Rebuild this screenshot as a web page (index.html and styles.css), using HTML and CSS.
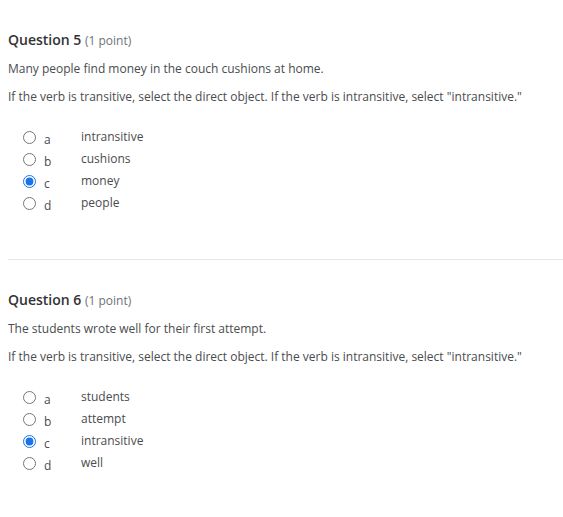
FILE: index.html
```html
<!DOCTYPE html>
<html>
<head>
<meta charset="utf-8">
<link rel="stylesheet" href="styles.css">
</head>
<body>
<div class="page">
  <section class="question">
    <h2 class="q-title">Question 5 <span class="pts">(1 point)</span></h2>
    <p class="q-text">Many people find money in the couch cushions at home.</p>
    <p class="q-text">If the verb is transitive, select the direct object. If the verb is intransitive, select "intransitive."</p>
    <ul class="options">
      <li class="opt"><input type="radio" name="q5"><span class="letter">a</span><span class="ans">intransitive</span></li>
      <li class="opt"><input type="radio" name="q5"><span class="letter">b</span><span class="ans">cushions</span></li>
      <li class="opt"><input type="radio" name="q5" checked><span class="letter">c</span><span class="ans">money</span></li>
      <li class="opt"><input type="radio" name="q5"><span class="letter">d</span><span class="ans">people</span></li>
    </ul>
  </section>
  <hr class="divider">
  <section class="question">
    <h2 class="q-title">Question 6 <span class="pts">(1 point)</span></h2>
    <p class="q-text">The students wrote well for their first attempt.</p>
    <p class="q-text">If the verb is transitive, select the direct object. If the verb is intransitive, select "intransitive."</p>
    <ul class="options">
      <li class="opt"><input type="radio" name="q6"><span class="letter">a</span><span class="ans">students</span></li>
      <li class="opt"><input type="radio" name="q6"><span class="letter">b</span><span class="ans">attempt</span></li>
      <li class="opt"><input type="radio" name="q6" checked><span class="letter">c</span><span class="ans">intransitive</span></li>
      <li class="opt"><input type="radio" name="q6"><span class="letter">d</span><span class="ans">well</span></li>
    </ul>
  </section>
</div>
</body>
</html>
```

FILE: styles.css
```css
html, body {
  margin: 0;
  padding: 0;
  background: #ffffff;
}
body {
  font-family: "Open Sans", "Liberation Sans", sans-serif;
  color: #494c4e;
}
.page {
  padding: 30px 0 0 8px;
}
.question {
  margin: 0;
}
.q-title {
  margin: 0;
  font-size: 14px;
  line-height: 20px;
  font-weight: 600;
  color: #333333;
}
.pts {
  font-size: 12px;
  font-weight: 400;
  color: #6e7376;
}
.q-text {
  margin: 9px 0 0 0;
  font-size: 12px;
  line-height: 18px;
  color: #494c4e;
}
.q-text + .q-text {
  margin-top: 10px;
}
.options {
  list-style: none;
  margin: 20px 0 0 0;
  padding: 0 0 0 15px;
}
.opt {
  display: flex;
  align-items: center;
  height: 22px;
  font-size: 12px;
  color: #494c4e;
}
.opt input {
  margin: 0;
  width: 13px;
  height: 13px;
  accent-color: #1a73e8;
}
.letter {
  width: 37px;
  padding-left: 8px;
  position: relative;
  top: 2px;
}
.ans {
  line-height: 18px;
}
.divider {
  border: 0;
  border-top: 1px solid #e6e6e6;
  margin: 45px 0 30px 0;
  height: 0;
}
```
